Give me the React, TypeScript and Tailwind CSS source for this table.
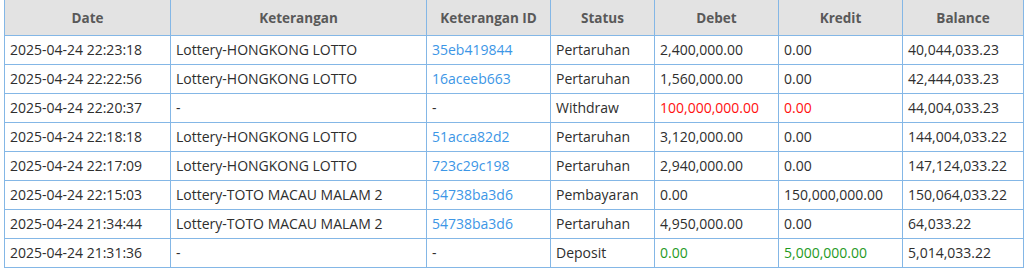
import React from 'react';

interface Row {
  date: string;
  ket: string;
  id: string;
  status: string;
  debet: string;
  kredit: string;
  balance: string;
  tone?: 'red' | 'green';
}

const ROWS: Row[] = [
  { date: '2025-04-24 22:23:18', ket: 'Lottery-HONGKONG LOTTO', id: '35eb419844', status: 'Pertaruhan', debet: '2,400,000.00', kredit: '0.00', balance: '40,044,033.23' },
  { date: '2025-04-24 22:22:56', ket: 'Lottery-HONGKONG LOTTO', id: '16aceeb663', status: 'Pertaruhan', debet: '1,560,000.00', kredit: '0.00', balance: '42,444,033.23' },
  { date: '2025-04-24 22:20:37', ket: '-', id: '-', status: 'Withdraw', debet: '100,000,000.00', kredit: '0.00', balance: '44,004,033.23', tone: 'red' },
  { date: '2025-04-24 22:18:18', ket: 'Lottery-HONGKONG LOTTO', id: '51acca82d2', status: 'Pertaruhan', debet: '3,120,000.00', kredit: '0.00', balance: '144,004,033.22' },
  { date: '2025-04-24 22:17:09', ket: 'Lottery-HONGKONG LOTTO', id: '723c29c198', status: 'Pertaruhan', debet: '2,940,000.00', kredit: '0.00', balance: '147,124,033.22' },
  { date: '2025-04-24 22:15:03', ket: 'Lottery-TOTO MACAU MALAM 2', id: '54738ba3d6', status: 'Pembayaran', debet: '0.00', kredit: '150,000,000.00', balance: '150,064,033.22' },
  { date: '2025-04-24 21:34:44', ket: 'Lottery-TOTO MACAU MALAM 2', id: '54738ba3d6', status: 'Pertaruhan', debet: '4,950,000.00', kredit: '0.00', balance: '64,033.22' },
  { date: '2025-04-24 21:31:36', ket: '-', id: '-', status: 'Deposit', debet: '0.00', kredit: '5,000,000.00', balance: '5,014,033.22', tone: 'green' },
];

const HEADERS = ['Date', 'Keterangan', 'Keterangan ID', 'Status', 'Debet', 'Kredit', 'Balance'];
const WIDTHS = [166, 256, 124, 104, 124, 124, 121];

const App: React.FC = () => {
  return (
    <div className="w-[1024px] h-[268px] overflow-hidden bg-white pl-[4px]" style={{ fontFamily: '"Open Sans", "Noto Sans", Arial, sans-serif' }}>
      <table className="table-fixed border-collapse w-[1019px] text-[14px] text-[#2e2e2e]">
        <colgroup>
          {WIDTHS.map((w, i) => (
            <col key={i} style={{ width: w }} />
          ))}
        </colgroup>
        <thead>
          <tr className="h-[35px] bg-[#e3e3e3]">
            {HEADERS.map(h => (
              <th key={h} className="border-x border-b border-[#84b7e6] font-bold text-[13.5px] text-[#595959] text-center pt-[2px]">
                {h}
              </th>
            ))}
          </tr>
        </thead>
        <tbody>
          {ROWS.map((r, i) => {
            const money = r.tone === 'red' ? 'text-[#ff1010]' : r.tone === 'green' ? 'text-[#1f9a1f]' : '';
            const cell = 'border border-[#84b7e6] px-[5px] whitespace-nowrap';
            return (
              <tr key={i} className="h-[29px]">
                <td className={cell}>{r.date}</td>
                <td className={cell}>{r.ket}</td>
                <td className={`${cell} ${r.id === '-' ? '' : 'text-[#3c96e6]'}`}>{r.id}</td>
                <td className={cell}>{r.status}</td>
                <td className={`${cell} ${money}`}>{r.debet}</td>
                <td className={`${cell} ${money}`}>{r.kredit}</td>
                <td className={cell}>{r.balance}</td>
              </tr>
            );
          })}
        </tbody>
      </table>
    </div>
  );
};

export default App;
